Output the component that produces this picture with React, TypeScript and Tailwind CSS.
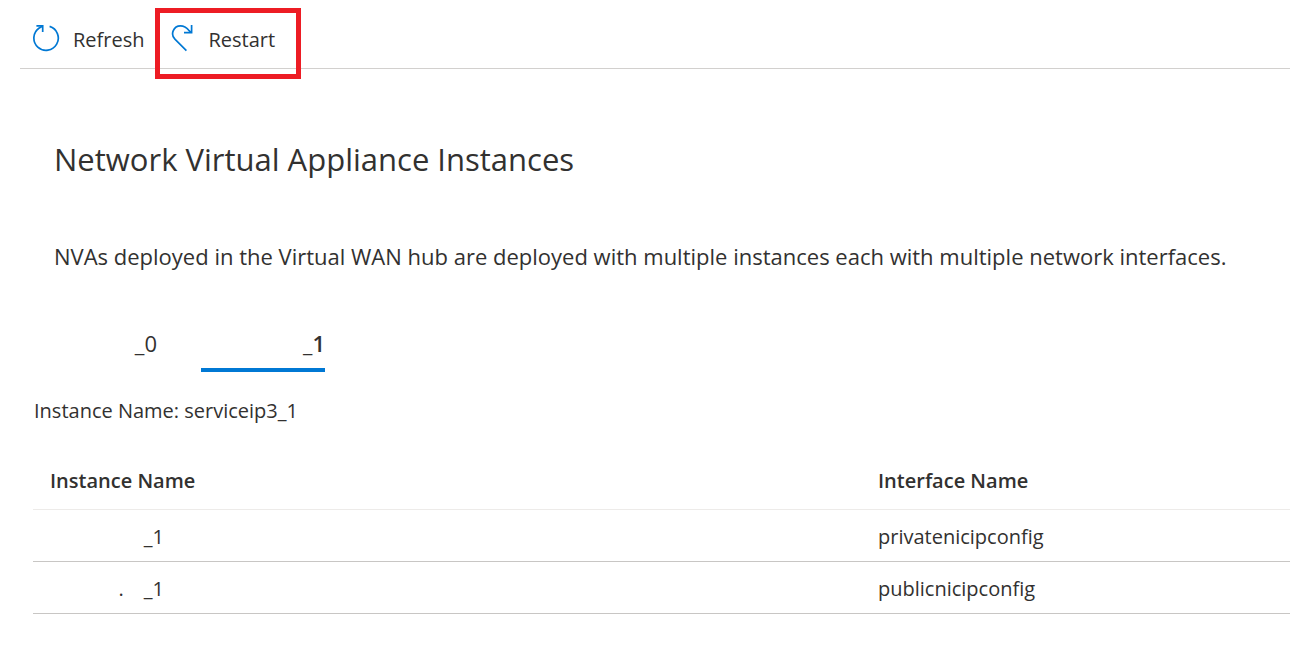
import { useState } from "react";

function RefreshIcon() {
  return (
    <svg aria-hidden="true" width="28" height="28" viewBox="0 0 28 28" fill="none" stroke="#0078d4" strokeWidth="1.7" className="mb-1 shrink-0">
      <path d="M16.6 2.4A12.2 12.2 0 1 1 6.2 4Q8.2 2.8 9.6 2" />
      <path d="M3.4 1.8H9.7V8" />
    </svg>
  );
}

function RestartIcon() {
  return (
    <svg aria-hidden="true" width="26" height="28" viewBox="0 0 26 28" fill="none" stroke="#0078d4" strokeWidth="1.7" className="mb-1 shrink-0">
      <path d="M15.4 26.7 3.9 15.2A7.9 7.9 0 0 1 9.5 1.8C13.4 1.8 16.2 4.3 17.8 6.3L20 8.4" />
      <path d="M20.6 1V8.7H13" />
    </svg>
  );
}

const rows = [
  { mark: "", name: "_1", iface: "privatenicipconfig" },
  { mark: ".", name: "_1", iface: "publicnicipconfig" },
];

export default function App() {
  const [tab, setTab] = useState(1);
  return (
    <main className="min-h-screen bg-white font-['Open_Sans','Noto_Sans',sans-serif] text-xl text-[#323130]">
      <div className="ml-5 flex h-[69px] items-start border-b border-[#d2d0ce] pl-[13px] pt-6">
        <button type="button" className="flex h-8 items-center gap-3">
          <RefreshIcon />
          Refresh
        </button>
        <div className="relative ml-[26px]">
          <button type="button" className="flex h-8 items-center gap-3">
            <RestartIcon />
            Restart
          </button>
          <span className="pointer-events-none absolute -top-4 -left-4 h-[71px] w-[146px] border-5 border-[#ed1c24]" />
        </div>
      </div>

      <section className="pl-[54px] pt-[66px]">
        <h1 className="text-[31px] leading-12">Network Virtual Appliance Instances</h1>
        <p className="mt-[57px] whitespace-nowrap text-[22px] leading-8">
          NVAs deployed in the Virtual WAN hub are deployed with multiple instances each with multiple network interfaces.
        </p>
      </section>

      <div role="tablist" aria-label="Instances" className="mt-13 flex gap-11 pl-8">
        <button
          type="button"
          role="tab"
          aria-selected={tab === 0}
          onClick={() => setTab(0)}
          className="h-12 w-[125px] border-b-4 border-transparent pb-1.5 text-right text-[22px] aria-selected:border-[#0078d4] aria-selected:font-semibold"
        >
          _0
        </button>
        <button
          type="button"
          role="tab"
          aria-selected={tab === 1}
          onClick={() => setTab(1)}
          className="h-12 w-[124px] border-b-4 border-transparent pb-1.5 text-right text-[22px] aria-selected:border-[#0078d4] aria-selected:font-semibold"
        >
          _1
        </button>
      </div>

      <p className="mt-[25px] pl-[34px] leading-7">Instance Name: serviceip3_1</p>

      <div className="pl-[33px] pt-7">
        <table className="w-full table-fixed text-left">
          <thead>
            <tr className="h-14 border-b border-[#edebe9]">
              <th className="w-[828px] pl-[17px] font-semibold">Instance Name</th>
              <th className="pl-[17px] font-semibold">Interface Name</th>
            </tr>
          </thead>
          <tbody>
            {rows.map((r) => (
              <tr key={r.iface} className="h-[52px] border-b border-[#c8c6c4]">
                <td className="pl-[17px] pt-1">
                  <span className="flex w-[114px] justify-end gap-5">
                    <span>{r.mark}</span>
                    <span>{r.name}</span>
                  </span>
                </td>
                <td className="pl-[17px] pt-1">{r.iface}</td>
              </tr>
            ))}
          </tbody>
        </table>
      </div>
    </main>
  );
}
